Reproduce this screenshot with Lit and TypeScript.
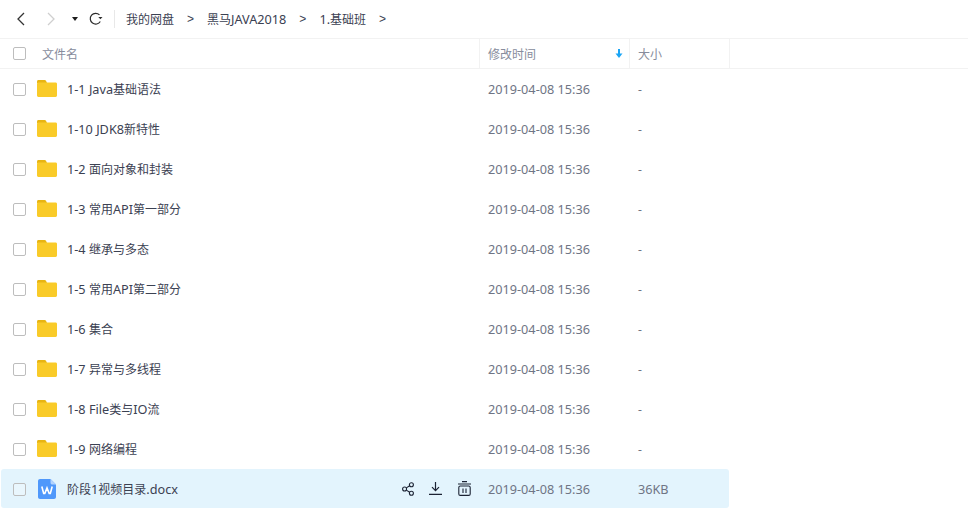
import { LitElement, html, css, svg } from "lit";
import { customElement } from "lit/decorators.js";

const rows = [
  "1-1 Java基础语法", "1-10 JDK8新特性", "1-2 面向对象和封装", "1-3 常用API第一部分", "1-4 继承与多态",
  "1-5 常用API第二部分", "1-6 集合", "1-7 异常与多线程", "1-8 File类与IO流", "1-9 网络编程",
];
const DATE = "2019-04-08 15:36";

/* Latin runs are set slightly larger than the CJK runs, as in the reference's UI face. */
const mixed = (text: string) =>
  text.split(/([\x00-\x7f]+)/).filter(Boolean).map((part) =>
    /^[\x00-\x7f]+$/.test(part) ? html`<span class="lat">${part}</span>` : part);

const folder = svg`<svg class="ficon" width="20" height="18" viewBox="0 0 20 18"><path d="M0 1.500C0 .7.6 0 1.400 0h6.200c.6 0 1.100.3 1.400.8L10 3H0z" fill="#e8b512"/><path d="M0 4c0-.8.6-1.400 1.400-1.400h17.200c.8 0 1.400.6 1.400 1.400v11.600c0 .8-.6 1.400-1.400 1.400H1.400C.6 17 0 16.400 0 15.600z" fill="#f9cb29"/></svg>`;
const word = svg`<svg class="ficon word" width="18" height="20" viewBox="0 0 18 20"><path d="M2 0h10.500L18 5.500V18c0 1.100-.9 2-2 2H2c-1.100 0-2-.9-2-2V2C0 .9.9 0 2 0z" fill="#4f98fb"/><path d="M12.500 0 18 5.500h-3.700c-1 0-1.800-.8-1.800-1.800z" fill="#b3d3fd"/><path d="M3.800 7.500 5.700 14.500h1.100L9 9l2.200 5.500h1.100l1.900-7" fill="none" stroke="#fff" stroke-width="1.600"/></svg>`;

@customElement("app-root")
export class AppRoot extends LitElement {
  static styles = css`
    :host { display: block; width: 968px; height: 531px; background: #fff; overflow: hidden;
      font-family: "Noto Sans", "Noto Sans CJK SC", sans-serif; font-size: 12px; color: #3b4152; }
    .lat { font-size: 12.7px; }
    .top { height: 38px; display: flex; align-items: center; border-bottom: 1px solid #f2f2f2; }
    .nav { display: flex; align-items: center; width: 115px; flex: none; border-right: 1px solid #e8e8e8; height: 18px; box-sizing: border-box; }
    .nav svg { flex: none; display: block; }
    .back { margin-left: 16px; }
    .fwd { margin-left: 20px; }
    .drop { margin-left: 16px; }
    .reload { margin-left: 11px; }
    .crumbs { display: flex; align-items: center; margin-left: 11px; color: #3b4152; }
    .crumb-sep { margin: 0 13px; font-family: "Liberation Sans", sans-serif; }
    .head { height: 29px; display: flex; align-items: stretch; border-bottom: 1px solid #f2f2f2; color: #878c9c; }
    .c-check { width: 37px; flex: none; display: flex; align-items: center; padding-left: 13px; box-sizing: border-box; }
    .box { width: 13px; height: 13px; border: 1px solid #bdbdbd; border-radius: 2px; box-sizing: border-box; background: #fff; display: block; }
    .h-name { width: 443px; flex: none; display: flex; align-items: center; padding-left: 5px; box-sizing: border-box; border-right: 1px solid #f2f2f2; }
    .h-time { width: 150px; flex: none; display: flex; align-items: center; justify-content: space-between; padding: 0 6px 0 8px; box-sizing: border-box; border-right: 1px solid #f2f2f2; }
    .h-size { width: 100px; flex: none; display: flex; align-items: center; padding-left: 8px; box-sizing: border-box; border-right: 1px solid #f2f2f2; }
    .list { width: 729px; display: flex; flex-direction: column; }
    .row { height: 40px; display: flex; align-items: center; }
    .row.sel { height: 39px; margin-left: 1px; background: #e3f4fd; border-radius: 3px; }
    .row.sel .c-check { width: 36px; padding-left: 12px; }
    .row.sel .box { background: #e9f6fd; margin-top: 1px; }
    .c-icon { width: 30px; flex: none; display: flex; align-items: center; }
    .ficon { display: block; }
    .word { margin: 1px 0 0 1px; }
    .name { flex: 1; white-space: nowrap; }
    .acts { display: flex; align-items: center; color: #1b2233; margin-right: 8px; }
    .acts svg { display: block; flex: none; }
    .dl { margin-left: 15px; }
    .bin { margin-left: 16px; }
    .time { width: 150px; flex: none; padding-left: 9px; box-sizing: border-box; color: #6f7585; white-space: nowrap; }
    .size { width: 100px; flex: none; padding-left: 9px; box-sizing: border-box; color: #6f7585; }
  `;

  render() {
    return html`
      <div class="top">
        <div class="nav">
          <svg class="back" width="10" height="14" viewBox="0 0 10 14"><path d="M8 1 2 7l6 6" fill="none" stroke="#333" stroke-width="1.300"/></svg>
          <svg class="fwd" width="10" height="14" viewBox="0 0 10 14"><path d="M2 1l6 6-6 6" fill="none" stroke="#cfcfcf" stroke-width="1.300"/></svg>
          <svg class="drop" width="6" height="4" viewBox="0 0 6 4"><path d="M0 0h6L3 4z" fill="#1d1d1d"/></svg>
          <svg class="reload" width="14" height="14" viewBox="0 0 14 14"><path d="M11.300 9.500A5.400 5.400 0 1 1 10.500 2.900" fill="none" stroke="#2b2b2b" stroke-width="1.200"/><path d="M9.300 4.900h4.200L11.400 7.300z" fill="#2b2b2b"/></svg>
        </div>
        <div class="crumbs">
          <span>我的网盘</span><span class="crumb-sep">&gt;</span>
          <span>${mixed("黑马JAVA2018")}</span><span class="crumb-sep">&gt;</span>
          <span>${mixed("1.基础班")}</span><span class="crumb-sep">&gt;</span>
        </div>
      </div>
      <div class="head">
        <div class="c-check"><span class="box"></span></div>
        <div class="h-name">文件名</div>
        <div class="h-time"><span>修改时间</span>
          <svg width="8" height="9" viewBox="0 0 8 9"><path d="M4 0v6" stroke="#1aa5f5" stroke-width="2"/><path d="M.5 4.500h7L4 9z" fill="#1aa5f5"/></svg>
        </div>
        <div class="h-size">大小</div>
      </div>
      <div class="list">
        ${rows.map((r) => html`
          <div class="row">
            <div class="c-check"><span class="box"></span></div>
            <div class="c-icon">${folder}</div>
            <div class="name">${mixed(r)}</div>
            <div class="time">${mixed(DATE)}</div>
            <div class="size">-</div>
          </div>`)}
        <div class="row sel">
          <div class="c-check"><span class="box"></span></div>
          <div class="c-icon">${word}</div>
          <div class="name">${mixed("阶段1视频目录.docx")}</div>
          <div class="acts">
            <svg width="12" height="14" viewBox="0 0 12 14" fill="none" stroke="#1b2233" stroke-width="1.100"><circle cx="2.600" cy="7" r="2"/><circle cx="9.400" cy="2.700" r="2"/><circle cx="9.400" cy="11.300" r="2"/><path d="M4.300 5.900 7.700 3.800M4.300 8.100l3.400 2.100"/></svg>
            <svg class="dl" width="13" height="13" viewBox="0 0 13 13" fill="none" stroke="#1b2233" stroke-width="1.200"><path d="M6.500 0v8.500M3 5.200l3.500 3.500 3.500-3.500M0 12.300h13"/></svg>
            <svg class="bin" width="13" height="15" viewBox="0 0 13 15" fill="none" stroke="#1b2233" stroke-width="1.100"><path d="M4 .6h5M0 3h13"/><rect x=".8" y="5" width="11.400" height="9.400" rx="1.500"/><path d="M5 7.500v4.500M8 7.500v4.500"/></svg>
          </div>
          <div class="time">${mixed(DATE)}</div>
          <div class="size">${mixed("36KB")}</div>
        </div>
      </div>
    `;
  }
}
